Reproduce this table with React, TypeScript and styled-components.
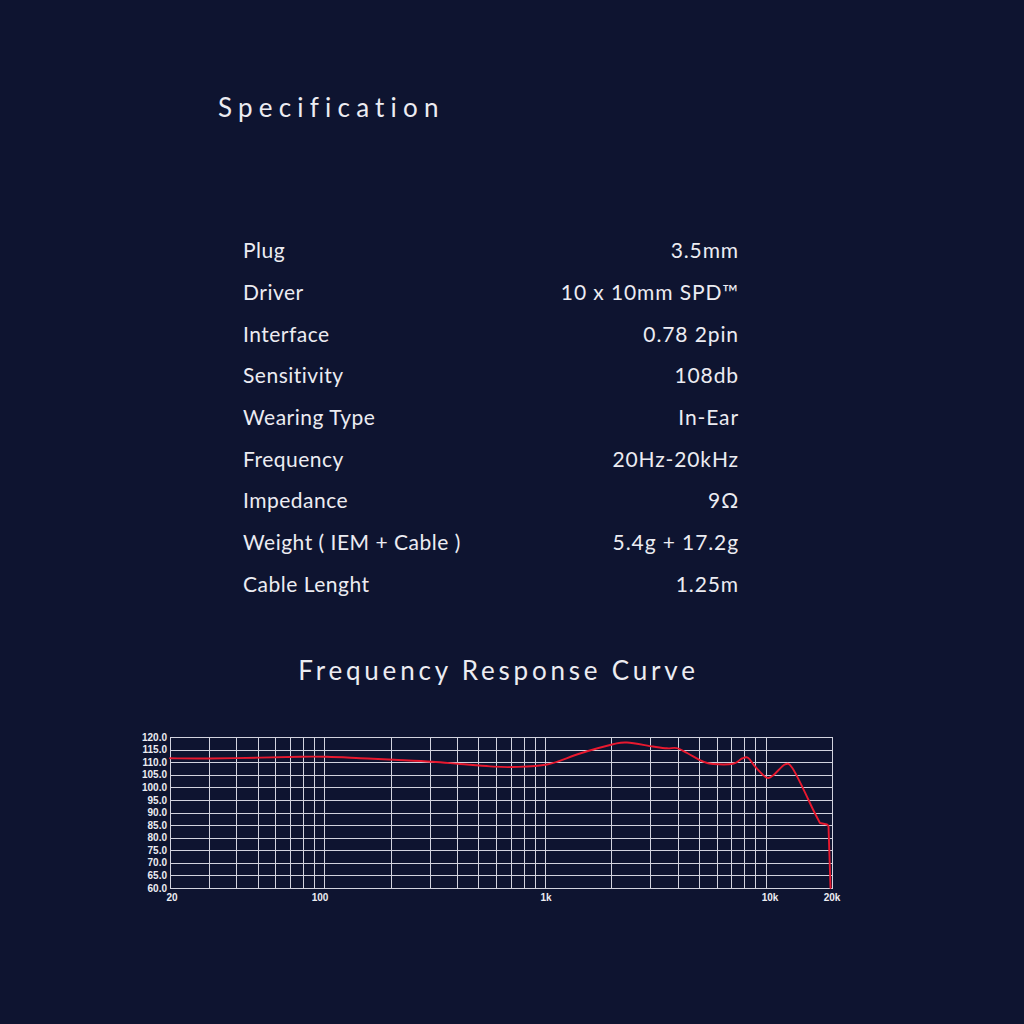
import React from "react";
import styled, { createGlobalStyle } from "styled-components";

const GlobalStyle = createGlobalStyle`
  html, body {
    margin: 0;
    padding: 0;
    background: #0e1430;
  }
  body {
    font-family: "Lato", "Noto Sans", sans-serif;
    -webkit-font-smoothing: antialiased;
  }
`;

const Page = styled.main`
  width: 1024px;
  min-height: 1024px;
  box-sizing: border-box;
  padding-top: 92px;
  background: #0e1430;
  color: #ececf2;
  display: flex;
  flex-direction: column;
  align-items: flex-start;
`;

const SectionTitle = styled.h1`
  margin: 0 0 0 218px;
  font-size: 26px;
  line-height: 1.2;
  font-weight: 400;
  letter-spacing: 6.2px;
  color: #ececf2;
`;

const SpecTable = styled.dl`
  margin: 106px 0 0 243px;
  width: 496px;
  display: grid;
  grid-template-columns: 1fr auto;
  grid-auto-rows: 41.7px;
  align-items: center;
`;

const SpecLabel = styled.dt`
  margin: 0;
  font-size: 21px;
  line-height: 41.7px;
  letter-spacing: 0.5px;
  color: #ececf2;
`;

const SpecValue = styled.dd`
  margin: 0;
  font-size: 21px;
  line-height: 41.7px;
  letter-spacing: 0.9px;
  text-align: right;
  color: #ececf2;
`;

const ChartTitle = styled.h2`
  margin: 51px 0 0;
  width: 100%;
  box-sizing: border-box;
  padding-right: 27px;
  text-align: center;
  font-size: 26px;
  line-height: 1.2;
  font-weight: 400;
  letter-spacing: 3.8px;
  color: #ececf2;
`;

const ChartFigure = styled.figure`
  margin: 41px 0 0 130px;
  width: 720px;
  height: 180px;
  svg {
    display: block;
  }
`;

const specs: [string, string][] = [
  ["Plug", "3.5mm"],
  ["Driver", "10 x 10mm SPD™"],
  ["Interface", "0.78 2pin"],
  ["Sensitivity", "108db"],
  ["Wearing Type", "In-Ear"],
  ["Frequency", "20Hz-20kHz"],
  ["Impedance", "9Ω"],
  ["Weight ( IEM + Cable )", "5.4g + 17.2g"],
  ["Cable Lenght", "1.25m"],
];

const X0 = 170;
const X1 = 832;
const Y0 = 737;
const Y1 = 888;
const fx = (f: number) => X0 + ((Math.log10(f) - Math.log10(20)) / 3) * (X1 - X0);
const dy = (db: number) => Y0 + ((120 - db) / 60) * (Y1 - Y0);

const freqs: number[] = [];
[10, 100, 1000, 10000].forEach((d) => {
  for (let m = 1; m <= 9; m++) {
    const f = d * m;
    if (f > 20 && f < 20000) freqs.push(f);
  }
});

const dbs: number[] = [];
for (let v = 60; v <= 120; v += 5) dbs.push(v);

const pts: [number, number][] = [
  [170, 758.3], [210, 758.5], [260, 757.6], [300, 756.7], [327, 756.8], [360, 758.2],
  [394, 759.8], [432, 761.7], [460, 764], [490, 766.4], [513, 767], [547, 764.5],
  [580, 753.5], [613, 744.3], [627, 742.5], [653, 746.5], [667, 748.3], [677, 748.2],
  [688, 753.5], [703, 761.5], [713, 764], [733, 763.8], [742, 758.5], [748, 757.8],
  [755, 766.5], [766, 777.3], [773, 775.5], [785, 764.3], [792, 767.5], [803, 788.3],
  [813, 809.5], [820, 823],
];

function smoothPath(p: [number, number][]) {
  let d = `M${p[0][0]},${p[0][1]}`;
  for (let i = 0; i < p.length - 1; i++) {
    const p0 = p[i - 1] || p[i];
    const p1 = p[i];
    const p2 = p[i + 1];
    const p3 = p[i + 2] || p2;
    const c1x = p1[0] + (p2[0] - p0[0]) / 6;
    const c1y = p1[1] + (p2[1] - p0[1]) / 6;
    const c2x = p2[0] - (p3[0] - p1[0]) / 6;
    const c2y = p2[1] - (p3[1] - p1[1]) / 6;
    d += ` C${c1x.toFixed(2)},${c1y.toFixed(2)} ${c2x.toFixed(2)},${c2y.toFixed(2)} ${p2[0]},${p2[1]}`;
  }
  return d;
}

const curve = smoothPath(pts) + " L827,824.5 L828.5,826 L830.5,888";

const xLabels: [string, number][] = [
  ["20", 172],
  ["100", 320],
  ["1k", 546],
  ["10k", 770],
  ["20k", 832],
];

function ResponseChart() {
  return (
    <svg width={720} height={180} viewBox="130 728 720 180">
      <g stroke="#d2d3de" strokeWidth={1} shapeRendering="crispEdges">
        {dbs.map((v) => (
          <line key={v} x1={X0} x2={X1} y1={Math.round(dy(v)) + 0.5} y2={Math.round(dy(v)) + 0.5} />
        ))}
        {freqs.map((f) => (
          <line key={f} x1={Math.round(fx(f)) + 0.5} x2={Math.round(fx(f)) + 0.5} y1={Y0} y2={Y1} />
        ))}
        <rect x={X0 + 0.5} y={Y0 + 0.5} width={X1 - X0} height={Y1 - Y0} fill="none" />
      </g>
      <path d={curve} fill="none" stroke="#e8192f" strokeWidth={1.9} strokeLinejoin="round" strokeLinecap="round" />
      <g fill="#ececf2" fontFamily='"Liberation Sans", Arial, sans-serif' fontSize={10} fontWeight={700}>
        {dbs.map((v) => (
          <text key={v} x={167} y={dy(v) + 3.6} textAnchor="end">
            {v.toFixed(1)}
          </text>
        ))}
        {xLabels.map(([t, x]) => (
          <text key={t} x={x} y={901} textAnchor="middle">
            {t}
          </text>
        ))}
      </g>
    </svg>
  );
}

export default function App() {
  return (
    <>
      <GlobalStyle />
      <Page>
        <SectionTitle>Specification</SectionTitle>
        <SpecTable>
          {specs.map(([k, v]) => (
            <React.Fragment key={k}>
              <SpecLabel>{k}</SpecLabel>
              <SpecValue>{v}</SpecValue>
            </React.Fragment>
          ))}
        </SpecTable>
        <ChartTitle>Frequency Response Curve</ChartTitle>
        <ChartFigure>
          <ResponseChart />
        </ChartFigure>
      </Page>
    </>
  );
}
